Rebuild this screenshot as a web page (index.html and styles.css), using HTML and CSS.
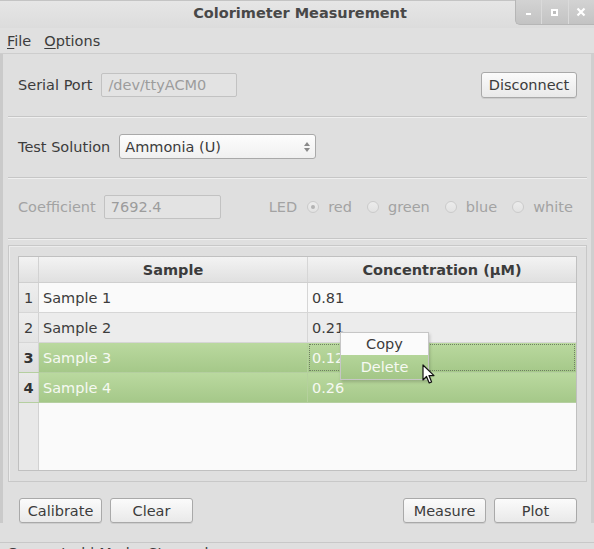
FILE: index.html
```html
<!DOCTYPE html>
<html>
<head>
<meta charset="utf-8">
<title>Colorimeter Measurement</title>
<link rel="stylesheet" href="styles.css">
</head>
<body>
<div class="window">
  <div class="titlebar">
    <span class="title">Colorimeter Measurement</span>
    <div class="wm">
      <span class="wm-btn"><svg width="8" height="8" viewBox="0 0 8 8"><rect x="1" y="5" width="5" height="2" fill="#fff"/></svg></span>
      <span class="wm-btn"><svg width="9" height="9" viewBox="0 0 9 9"><rect x="1" y="1" width="7" height="7" fill="#fff"/><rect x="3" y="3" width="3" height="3" fill="#bdbdbd"/></svg></span>
      <span class="wm-btn"><svg width="10" height="10" viewBox="0 0 10 10"><path d="M1.5 1.5 L8.5 8.5 M8.5 1.5 L1.5 8.5" stroke="#fff" stroke-width="2.2"/></svg></span>
    </div>
  </div>
  <div class="menubar">
    <span class="menu"><u>F</u>ile</span>
    <span class="menu"><u>O</u>ptions</span>
  </div>
  <div class="client">
    <div class="section s-port">
      <span class="label">Serial Port</span>
      <span class="field port">/dev/ttyACM0</span>
      <span class="spacer"></span>
      <div class="btn btn-disconnect">Disconnect</div>
    </div>
    <div class="section s-test">
      <span class="label">Test Solution</span>
      <div class="combo">
        <span>Ammonia (U)</span>
        <svg class="spin" width="8" height="12" viewBox="0 0 8 12"><path d="M4 1 L7 5 L1 5 Z" fill="#8a8a8a"/><path d="M1 7 L7 7 L4 11 Z" fill="#8a8a8a"/></svg>
      </div>
    </div>
    <div class="section s-coef">
      <span class="label dis">Coefficient</span>
      <span class="field coef">7692.4</span>
      <span class="led dis">LED</span>
      <span class="radio checked"></span><span class="rlabel dis">red</span>
      <span class="radio"></span><span class="rlabel dis">green</span>
      <span class="radio"></span><span class="rlabel dis">blue</span>
      <span class="radio"></span><span class="rlabel dis">white</span>
    </div>
    <div class="group">
      <div class="table">
        <div class="row head">
          <div class="rh"></div>
          <div class="c1 hc">Sample</div>
          <div class="c2 hc">Concentration (µM)</div>
        </div>
        <div class="row">
          <div class="rh">1</div>
          <div class="c1">Sample 1</div>
          <div class="c2">0.81</div>
        </div>
        <div class="row alt">
          <div class="rh">2</div>
          <div class="c1">Sample 2</div>
          <div class="c2">0.21</div>
        </div>
        <div class="row sel">
          <div class="rh">3</div>
          <div class="c1">Sample 3</div>
          <div class="c2 focus">0.12</div>
        </div>
        <div class="row sel">
          <div class="rh">4</div>
          <div class="c1">Sample 4</div>
          <div class="c2">0.26</div>
        </div>
        <div class="row empty">
          <div class="rh"></div>
          <div class="fill"></div>
        </div>
      </div>
    </div>
    <div class="buttons">
      <div class="btn bb">Calibrate</div>
      <div class="btn bb">Clear</div>
      <span class="spacer"></span>
      <div class="btn bb">Measure</div>
      <div class="btn bb">Plot</div>
    </div>
  </div>
  <div class="status">Connected | Mode: Stopped</div>
</div>

<div class="ctxmenu">
  <div class="ctx-item">Copy</div>
  <div class="ctx-item active">Delete</div>
</div>
<svg class="cursor" width="14" height="21" viewBox="0 0 14 21">
  <path d="M1 1 L1 16 L4.5 12.5 L7.2 19 L9.6 18 L7 11.6 L12 11.6 Z" fill="#fff" stroke="#111" stroke-width="1.2" stroke-linejoin="round"/>
</svg>
</body>
</html>
```

FILE: styles.css
```css
html, body {
  margin: 0;
  padding: 0;
}
body {
  width: 594px;
  height: 549px;
  overflow: hidden;
  background: #dfdfdf;
  font-family: "DejaVu Sans", "Noto Sans", sans-serif;
  font-size: 14.5px;
  color: #3c3c3c;
  position: relative;
}
.window {
  width: 594px;
  height: 549px;
  display: flex;
  flex-direction: column;
  box-sizing: border-box;
}
.titlebar {
  height: 28px;
  flex: none;
  background: linear-gradient(#e6e6e6, #dcdcdc);
  border-top: 1px solid #c4c4c4;
  box-sizing: border-box;
  display: flex;
  align-items: center;
  justify-content: center;
  position: relative;
}
.title {
  font-weight: bold;
  font-size: 14.5px;
  color: #484848;
  margin-top: -4px;
  margin-left: 6px;
}
.wm {
  position: absolute;
  right: 0;
  top: -1px;
  width: 78px;
  height: 24px;
  display: flex;
  background: linear-gradient(#d3d3d3, #c3c3c3);
  border-left: 1px solid #b6b6b6;
  border-bottom: 1px solid #b6b6b6;
  border-bottom-left-radius: 5px;
}
.wm-btn {
  flex: 1;
  display: flex;
  align-items: center;
  justify-content: center;
  border-left: 1px solid #dadada;
}
.wm-btn:first-child {
  border-left: none;
}
.menubar {
  height: 25px;
  flex: none;
  border-bottom: 1px solid #cdcdcd;
  display: flex;
  align-items: center;
  padding-left: 7px;
  gap: 13px;
  background: #e0e0e0;
}
.menu u {
  text-decoration: underline;
  text-underline-offset: 2px;
}
.client {
  flex: none;
  border-left: 3px solid #cacaca;
  border-right: 3px solid #cfcfcf;
  padding: 0 4px 0 5px;
  display: flex;
  flex-direction: column;
}
.section {
  display: flex;
  align-items: center;
  padding: 0 10px 1px;
  box-sizing: border-box;
  border-bottom: 1px solid #c6c6c6;
  box-shadow: 0 1px 0 #efefef;
  height: 61px;
}
.section > * {
  flex: none;
}
.spacer,
.section > .spacer {
  flex: 1;
}
.s-port {
  height: 63px;
  padding-bottom: 0;
}
.s-coef {
  padding-bottom: 2px;
}
.label {
  margin-right: 8px;
}
.s-test .label {
  margin-right: 9px;
}
.dis {
  color: #a3a3a3;
}
.field {
  height: 24px;
  box-sizing: border-box;
  border: 1px solid #c2c2c2;
  border-radius: 2px;
  background: #e3e3e3;
  color: #9c9c9c;
  display: flex;
  align-items: center;
  padding-left: 6px;
}
.port {
  width: 136px;
  margin-left: 1px;
}
.coef {
  width: 117px;
}
.btn {
  box-sizing: border-box;
  border: 1px solid #a9a9a9;
  border-radius: 3px;
  background: linear-gradient(#fbfbfb, #e9e9e9);
  box-shadow: 0 1px 0 rgba(0,0,0,0.08);
  display: flex;
  align-items: center;
  justify-content: center;
  color: #3c3c3c;
}
.btn-disconnect {
  width: 96px;
  height: 26px;
}
.combo {
  width: 197px;
  height: 25px;
  box-sizing: border-box;
  border: 1px solid #a9a9a9;
  border-radius: 3px;
  background: linear-gradient(#fdfdfd, #f0f0f0);
  display: flex;
  align-items: center;
  padding-left: 5px;
  padding-right: 4px;
}
.combo span {
  flex: 1;
}
.led {
  margin-left: 48px;
  margin-right: 10px;
}
.radio {
  width: 12px;
  height: 12px;
  box-sizing: border-box;
  border-radius: 50%;
  border: 1px solid #cbcbcb;
  background: linear-gradient(#ececec, #e2e2e2);
  margin-right: 9px;
  position: relative;
}
.radio.checked::after {
  content: "";
  position: absolute;
  left: 3px;
  top: 3px;
  width: 4px;
  height: 4px;
  border-radius: 50%;
  background: #b3b3b3;
}
.rlabel {
  margin-right: 15px;
}
.group {
  margin-top: 6px;
  height: 237px;
  box-sizing: border-box;
  border: 1px solid #c8c8c8;
  box-shadow: inset 1px 1px 0 #ececec;
  padding: 10px 9px 10px 9px;
  display: flex;
}
.table {
  flex: 1;
  border: 1px solid #c0c0c0;
  display: flex;
  flex-direction: column;
  background: #fafafa;
}
.row {
  display: flex;
  height: 29px;
  border-bottom: 1px solid #d6d6d6;
  flex: none;
}
.row.head {
  height: 25px;
  background: linear-gradient(#f3f3f3, #e0e0e0);
  border-bottom: 1px solid #cfcfcf;
}
.rh {
  width: 19px;
  flex: none;
  border-right: 1px solid #d2d2d2;
  background: linear-gradient(#eeeeee, #e4e4e4);
  display: flex;
  align-items: center;
  justify-content: center;
  color: #3c3c3c;
}
.head .rh {
  background: transparent;
}
.c1 {
  width: 264px;
  flex: none;
  border-right: 1px solid #d6d6d6;
  display: flex;
  align-items: center;
  padding-left: 4px;
}
.c2 {
  flex: 1;
  display: flex;
  align-items: center;
  padding-left: 4px;
}
.hc {
  justify-content: center;
  font-weight: bold;
  padding-left: 0;
}
.head .c1 {
  width: 268px;
}
.row.alt {
  background: #ececec;
}
.row.sel {
  background: linear-gradient(#bad99f, #a5c889);
  border-bottom: 1px solid #b5cfa0;
  color: #f6f9f2;
}
.row.sel .rh {
  font-weight: bold;
  color: #333;
  background: linear-gradient(#e9e9e9, #dedede);
}
.row.sel .c1 {
  border-right: 1px solid #b5d19d;
}
.focus {
  outline: 1px dotted #6f7f62;
  outline-offset: -2px;
}
.row.empty {
  flex: 1;
  height: auto;
  border-bottom: none;
}
.row.empty .rh {
  background: #e8e8e8;
}
.fill {
  flex: 1;
}
.buttons {
  margin-top: 16px;
  display: flex;
  padding: 0 10px 0 11px;
  gap: 8px;
}
.bb {
  width: 83px;
  height: 25px;
  flex: none;
}
.status {
  margin-top: 19px;
  border-top: 1px solid #c8c8c8;
  padding: 2px 0 0 7px;
  height: 30px;
  flex: none;
}
.ctxmenu {
  position: absolute;
  left: 340px;
  top: 332px;
  width: 89px;
  box-sizing: border-box;
  border: 1px solid #c6c6c6;
  background: #fbfbfb;
  box-shadow: 1px 2px 3px rgba(0,0,0,0.18);
  display: flex;
  flex-direction: column;
}
.ctx-item {
  height: 22px;
  display: flex;
  align-items: center;
  justify-content: center;
  color: #3c3c3c;
}
.ctx-item.active {
  height: 24px;
  background: linear-gradient(#b4d599, #a3c687);
  color: #f6f9f2;
}
.cursor {
  position: absolute;
  left: 422px;
  top: 364px;
}
```
